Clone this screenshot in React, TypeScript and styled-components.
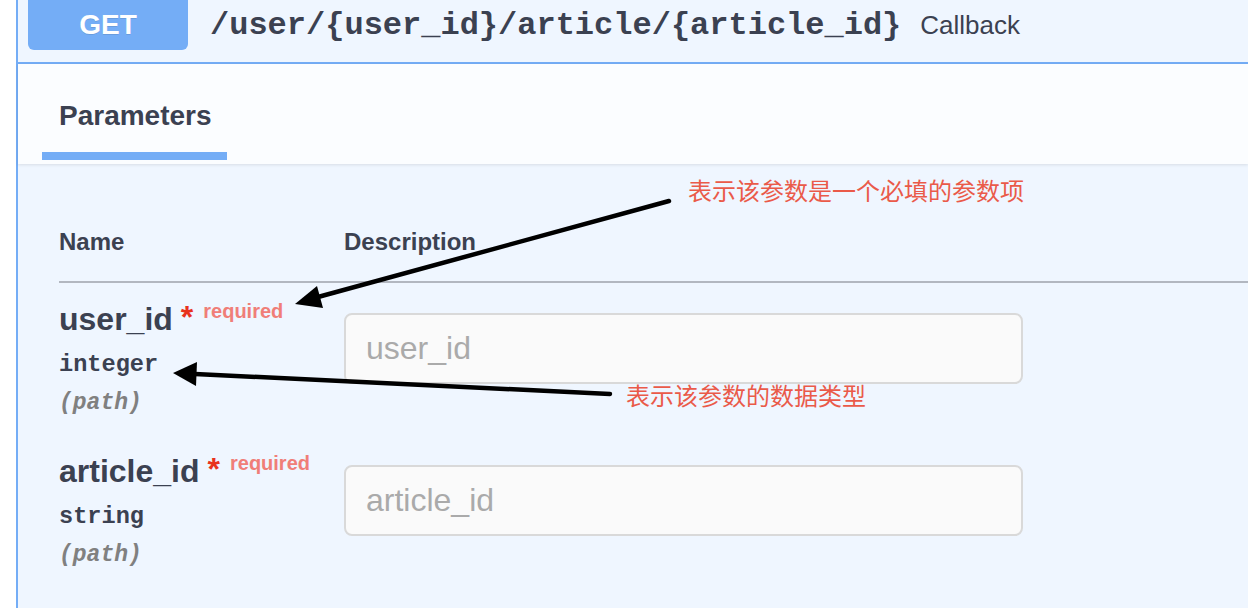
import React from "react";
import styled, { createGlobalStyle } from "styled-components";

const Global = createGlobalStyle`
  html, body { margin: 0; padding: 0; background: #ffffff; overflow: hidden; }
  body { font-family: "Liberation Sans", Arial, sans-serif; color: #3b4151; }
  * { box-sizing: border-box; }
`;

const Page = styled.div`
  position: relative;
  width: 1248px;
  height: 608px;
  padding-left: 16px;
  background: #ffffff;
  overflow: hidden;
`;

const Panel = styled.section`
  height: 100%;
  border-left: 2px solid #74adf6;
  background: #eff6ff;
  display: flex;
  flex-direction: column;
`;

const Header = styled.header`
  height: 64px;
  display: flex;
  align-items: baseline;
  padding-left: 10px;
  background: #eff6ff;
  border-bottom: 2px solid #74adf6;
`;

const MethodBadge = styled.span`
  display: block;
  width: 160px;
  height: 50px;
  line-height: 50px;
  text-align: center;
  background: #74adf6;
  color: #ffffff;
  font-weight: 700;
  font-size: 28px;
  border-radius: 0 0 6px 6px;
  text-shadow: 0 1px 0 rgba(0, 0, 0, 0.1);
`;

const PathText = styled.span`
  margin-left: 22px;
  font-family: "Liberation Mono", "Courier New", monospace;
  font-weight: 700;
  font-size: 32px;
  line-height: 36px;
  color: #3b4151;
`;

const Summary = styled.span`
  margin-left: 19px;
  font-size: 26px;
  line-height: 32px;
  color: #3b4151;
`;

const TabBar = styled.div`
  height: 100px;
  display: flex;
  align-items: flex-end;
  padding: 0 0 4px 24px;
  background: #fbfdff;
  box-shadow: 0 1px 3px rgba(0, 0, 0, 0.1);
  position: relative;
  z-index: 1;
`;

const Tab = styled.div`
  padding: 0 15px 20px 17px;
  border-bottom: 8px solid #74adf6;
  font-size: 28px;
  line-height: 32px;
  font-weight: 700;
  color: #3b4151;
`;

const Body = styled.div`
  flex: 1;
  padding: 63px 0 0 41px;
  background: #eff6ff;
`;

const Grid = styled.div`
  display: grid;
  grid-template-columns: 285px 679px;
`;

const ColHead = styled.div<{ $last?: boolean }>`
  font-size: 24px;
  line-height: 30px;
  font-weight: 700;
  color: #3b4151;
  padding-bottom: 24px;
  border-bottom: 2px solid #b2b7c0;
  margin-right: ${(p) => (p.$last ? "-400px" : "0")};
`;

const NameCell = styled.div`
  padding: 18px 0 17px;
  display: flex;
  flex-direction: column;
`;

const NameLine = styled.div`
  height: 36px;
  font-size: 32px;
  line-height: 36px;
  font-weight: 700;
  color: #3b4151;
  white-space: nowrap;
`;

const Star = styled.span`
  color: #e8321d;
  font-size: 32px;
  line-height: 0;
  margin-left: 8px;
  vertical-align: 2px;
`;

const Required = styled.span`
  color: #f07e78;
  font-size: 20px;
  line-height: 0;
  font-weight: 700;
  margin-left: 10px;
  vertical-align: 12px;
`;

const TypeLine = styled.div`
  margin-top: 13px;
  font-family: "Liberation Mono", "Courier New", monospace;
  font-weight: 700;
  font-size: 23.6px;
  line-height: 30px;
  color: #3b4151;
`;

const InLine = styled.div`
  margin-top: 8px;
  font-family: "Liberation Mono", "Courier New", monospace;
  font-weight: 700;
  font-style: italic;
  font-size: 23px;
  line-height: 30px;
  color: #808080;
`;

const ValueCell = styled.div`
  padding-top: 30px;
`;

const TextInput = styled.input`
  display: block;
  width: 679px;
  height: 71px;
  padding: 0 20px;
  border: 2px solid #d9d9d9;
  border-radius: 8px;
  background: #fafafa;
  font-family: "Liberation Sans", Arial, sans-serif;
  font-size: 32px;
  color: #3b4151;
  outline: none;
  &::placeholder { color: #aaaaaa; }
`;

const Overlay = styled.div`
  position: absolute;
  inset: 0;
  pointer-events: none;
`;

const Note = styled.div<{ $x: number; $y: number }>`
  position: absolute;
  left: ${(p) => p.$x}px;
  top: ${(p) => p.$y}px;
  font-family: "Noto Sans CJK SC", "Noto Sans", sans-serif;
  font-size: 24px;
  line-height: 24px;
  color: #ea5a49;
  white-space: nowrap;
`;

const ArrowSvg = styled.svg`
  position: absolute;
  left: 0;
  top: 0;
`;

const params = [
  { name: "user_id", type: "integer", where: "(path)" },
  { name: "article_id", type: "string", where: "(path)" },
];

export default function App() {
  return (
    <>
      <Global />
      <Page>
        <Panel>
          <Header>
            <MethodBadge>GET</MethodBadge>
            <PathText>/user/{"{user_id}"}/article/{"{article_id}"}</PathText>
            <Summary>Callback</Summary>
          </Header>
          <TabBar>
            <Tab>Parameters</Tab>
          </TabBar>
          <Body>
            <Grid>
              <ColHead>Name</ColHead>
              <ColHead $last>Description</ColHead>
              {params.map((p) => (
                <React.Fragment key={p.name}>
                  <NameCell>
                    <NameLine>
                      {p.name}
                      <Star>*</Star>
                      <Required>required</Required>
                    </NameLine>
                    <TypeLine>{p.type}</TypeLine>
                    <InLine>{p.where}</InLine>
                  </NameCell>
                  <ValueCell>
                    <TextInput placeholder={p.name} />
                  </ValueCell>
                </React.Fragment>
              ))}
            </Grid>
          </Body>
        </Panel>
        <Overlay>
          <ArrowSvg width="1248" height="608" viewBox="0 0 1248 608">
            <line x1="669" y1="201" x2="318" y2="297" stroke="#000" strokeWidth="4.5" strokeLinecap="round" />
            <polygon points="295,304 317,286 323,308" fill="#000" />
            <line x1="610" y1="394" x2="195" y2="374" stroke="#000" strokeWidth="4.5" strokeLinecap="round" />
            <polygon points="173,373 197,362 196,386" fill="#000" />
          </ArrowSvg>
          <Note $x={688} $y={178}>表示该参数是一个必填的参数项</Note>
          <Note $x={626} $y={383}>表示该参数的数据类型</Note>
        </Overlay>
      </Page>
    </>
  );
}
